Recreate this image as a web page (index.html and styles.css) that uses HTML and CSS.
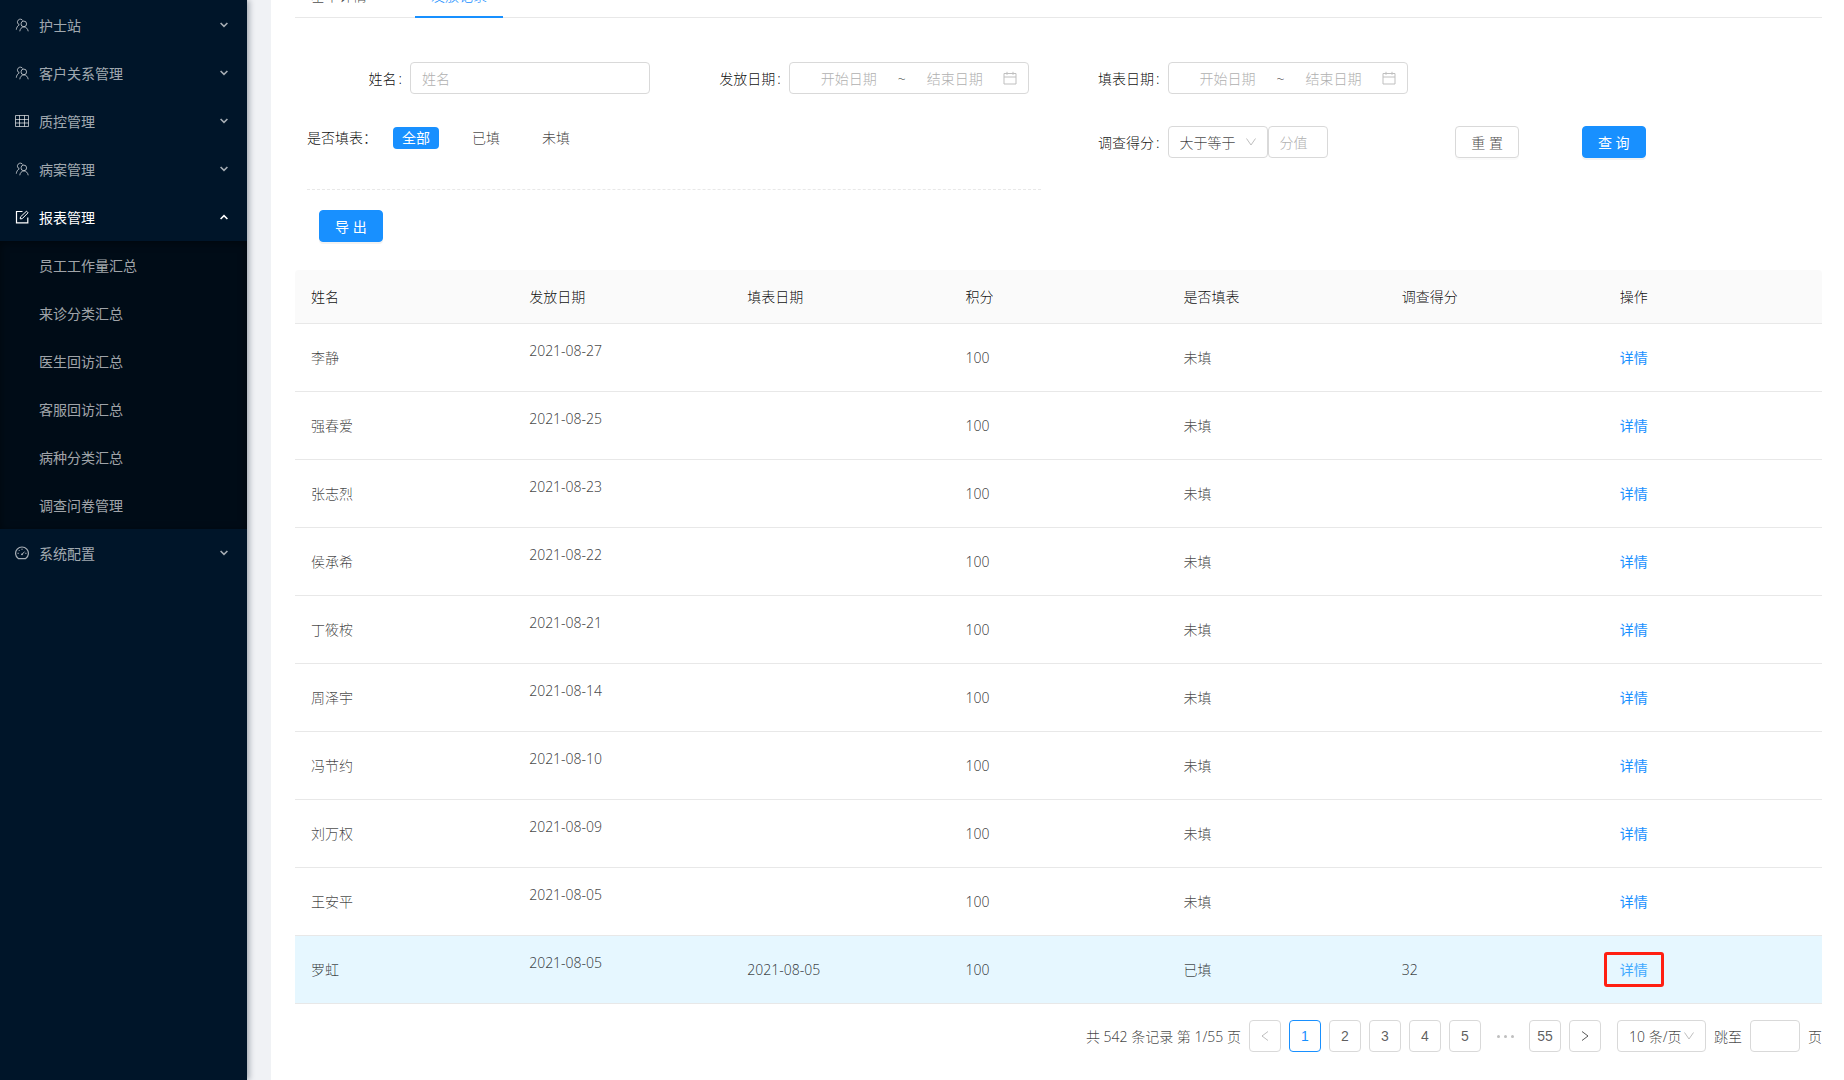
FILE: index.html
```html
<!DOCTYPE html>
<html lang="zh-CN">
<head>
<meta charset="utf-8">
<meta name="viewport" content="width=device-width, initial-scale=1">
<title>调查问卷管理</title>
<link rel="stylesheet" href="styles.css">
</head>
<body>
<svg class="sprite" aria-hidden="true">
  <symbol id="i-users" viewBox="0 0 14 14"><g fill="none" stroke="currentColor"><circle cx="8.800" cy="5.900" r="2.800"/><path d="M4.800 13.300C5 11 6.600 8.900 8.900 8.900S12.900 11 13.200 13.300M4.400 6.800A2.900 2.900 0 1 1 7.900 2.700M4.200 6.700C2.500 7.900 1.500 9.600 1.300 11.700"/></g></symbol>
  <symbol id="i-table" viewBox="0 0 14 14"><path d="M.5 1.500h13v11H.500zM.500 5.500h13M.500 9h13M4.500 1.500v11M9.500 1.500v11" fill="none" stroke="currentColor"/></symbol>
  <symbol id="i-form" viewBox="0 0 14 14"><path d="M7.500 1.500H1.500v11.300h11.300V7.500" fill="none" stroke="currentColor" stroke-width="1.200"/><path d="M5.200 8.900l.3-2L11.500 1.200l1.500 1.600L7.200 8.700z" fill="none" stroke="currentColor"/></symbol>
  <symbol id="i-dash" viewBox="0 0 14 14"><path d="M3.300 12.600A6.400 6.400 0 1 1 10.700 12.600z" fill="none" stroke="currentColor" stroke-width="1.200" stroke-linejoin="round"/><path d="M7 8.400L9.600 5.600M7 2.600v1.300M2.500 7.300h1.300M10.200 7.300h1.300M3.800 4.100l.9.900" fill="none" stroke="currentColor"/><circle cx="7" cy="8.300" r=".9" fill="currentColor"/></symbol>
  <symbol id="i-cal" viewBox="0 0 14 14"><path d="M1 2.500h12v10.500H1zM1 6h12M4 .8v3M10 .8v3" fill="none" stroke="currentColor"/></symbol>
  <symbol id="i-down" viewBox="0 0 12 12"><path d="M1.500 2.500L6 9l4.500-6.500" fill="none" stroke="currentColor"/></symbol>
  <symbol id="i-arrow" viewBox="0 0 8 6"><path d="M.6 1L4 4.300 7.400 1" fill="none" stroke="currentColor" stroke-width="1.600"/></symbol>
  <symbol id="i-left" viewBox="0 0 12 12"><path d="M9 1.500L3 6l6 4.500" fill="none" stroke="currentColor"/></symbol>
</svg>

<div class="layout">
  <nav class="sider">
    <ul class="menu">
      <li><a class="item" href="#"><svg class="icon"><use href="#i-users"/></svg><span>护士站</span><svg class="arrow"><use href="#i-arrow"/></svg></a></li>
      <li><a class="item" href="#"><svg class="icon"><use href="#i-users"/></svg><span>客户关系管理</span><svg class="arrow"><use href="#i-arrow"/></svg></a></li>
      <li><a class="item" href="#"><svg class="icon"><use href="#i-table"/></svg><span>质控管理</span><svg class="arrow"><use href="#i-arrow"/></svg></a></li>
      <li><a class="item" href="#"><svg class="icon"><use href="#i-users"/></svg><span>病案管理</span><svg class="arrow"><use href="#i-arrow"/></svg></a></li>
      <li><a class="item open" href="#"><svg class="icon"><use href="#i-form"/></svg><span>报表管理</span><svg class="arrow"><use href="#i-arrow"/></svg></a>
        <ul class="submenu">
          <li><a class="item" href="#">员工工作量汇总</a></li>
          <li><a class="item" href="#">来诊分类汇总</a></li>
          <li><a class="item" href="#">医生回访汇总</a></li>
          <li><a class="item" href="#">客服回访汇总</a></li>
          <li><a class="item" href="#">病种分类汇总</a></li>
          <li><a class="item" href="#">调查问卷管理</a></li>
        </ul>
      </li>
      <li><a class="item" href="#"><svg class="icon"><use href="#i-dash"/></svg><span>系统配置</span><svg class="arrow"><use href="#i-arrow"/></svg></a></li>
    </ul>
  </nav>

  <main class="content">
    <div class="tabs">
      <a class="tab" href="#">基本详情</a>
      <a class="tab active" href="#">发放记录</a>
    </div>

    <form class="filters">
      <div class="field">
        <label class="caption" for="name">姓名</label>
        <input class="box name" id="name" type="text" placeholder="姓名">
      </div>
      <div class="field">
        <label class="caption" for="send-from">发放日期</label>
        <div class="box range">
          <input id="send-from" type="text" placeholder="开始日期"><span>~</span><input type="text" placeholder="结束日期" aria-label="发放结束日期"><svg class="icon"><use href="#i-cal"/></svg>
        </div>
      </div>
      <div class="field">
        <label class="caption" for="fill-from">填表日期</label>
        <div class="box range">
          <input id="fill-from" type="text" placeholder="开始日期"><span>~</span><input type="text" placeholder="结束日期" aria-label="填表结束日期"><svg class="icon"><use href="#i-cal"/></svg>
        </div>
      </div>
      <fieldset class="status">
        <legend class="status-title">是否填表：</legend>
        <label class="tag"><input type="radio" name="filled" checked>全部</label>
        <label class="tag"><input type="radio" name="filled">已填</label>
        <label class="tag"><input type="radio" name="filled">未填</label>
      </fieldset>
      <div class="field">
        <label class="caption" for="op">调查得分</label>
        <div class="select op"><select class="box" id="op"><option>大于等于</option></select><svg><use href="#i-down"/></svg></div>
        <input class="box score" type="text" placeholder="分值" aria-label="分值">
      </div>
      <div class="actions">
        <button class="btn" type="reset">重 置</button>
        <button class="btn primary" type="button">查 询</button>
      </div>
    </form>

    <div class="toolbar"><button class="btn primary" type="button">导 出</button></div>

    <table class="records">
      <thead><tr><th>姓名</th><th>发放日期</th><th>填表日期</th><th>积分</th><th>是否填表</th><th>调查得分</th><th>操作</th></tr></thead>
      <tbody>
        <tr><td>李静</td><td><p>2021-08-27</p></td><td></td><td>100</td><td>未填</td><td></td><td><a href="#">详情</a></td></tr>
        <tr><td>强春爱</td><td><p>2021-08-25</p></td><td></td><td>100</td><td>未填</td><td></td><td><a href="#">详情</a></td></tr>
        <tr><td>张志烈</td><td><p>2021-08-23</p></td><td></td><td>100</td><td>未填</td><td></td><td><a href="#">详情</a></td></tr>
        <tr><td>侯承希</td><td><p>2021-08-22</p></td><td></td><td>100</td><td>未填</td><td></td><td><a href="#">详情</a></td></tr>
        <tr><td>丁筱桉</td><td><p>2021-08-21</p></td><td></td><td>100</td><td>未填</td><td></td><td><a href="#">详情</a></td></tr>
        <tr><td>周泽宇</td><td><p>2021-08-14</p></td><td></td><td>100</td><td>未填</td><td></td><td><a href="#">详情</a></td></tr>
        <tr><td>冯节约</td><td><p>2021-08-10</p></td><td></td><td>100</td><td>未填</td><td></td><td><a href="#">详情</a></td></tr>
        <tr><td>刘万权</td><td><p>2021-08-09</p></td><td></td><td>100</td><td>未填</td><td></td><td><a href="#">详情</a></td></tr>
        <tr><td>王安平</td><td><p>2021-08-05</p></td><td></td><td>100</td><td>未填</td><td></td><td><a href="#">详情</a></td></tr>
        <tr class="current"><td>罗虹</td><td><p>2021-08-05</p></td><td>2021-08-05</td><td>100</td><td>已填</td><td>32</td><td><a class="marked" href="#">详情</a></td></tr>
      </tbody>
    </table>

    <div class="pagination">
      <span class="total">共 542 条记录 第 1/55 页</span>
      <button class="page" type="button" disabled aria-label="上一页"><svg><use href="#i-left"/></svg></button>
      <button class="page active" type="button">1</button>
      <button class="page" type="button">2</button>
      <button class="page" type="button">3</button>
      <button class="page" type="button">4</button>
      <button class="page" type="button">5</button>
      <span class="more"><i></i><i></i><i></i></span>
      <button class="page" type="button">55</button>
      <button class="page next" type="button" aria-label="下一页"><svg><use href="#i-left"/></svg></button>
      <div class="select size"><select class="box" aria-label="每页条数"><option>10 条/页</option></select><svg><use href="#i-down"/></svg></div>
      <label for="jump">跳至</label>
      <input class="box jump" id="jump" type="text">
      <span>页</span>
    </div>
  </main>
</div>
</body>
</html>
```

FILE: styles.css
```css
* { box-sizing: border-box; }

body {
  margin: 0;
  background: #f0f2f5;
  color: rgba(0, 0, 0, 0.75);
  font: 300 14px/21px "Noto Sans", "Noto Sans CJK SC", sans-serif;
}

a { color: #1890ff; text-decoration: none; }
ul { margin: 0; padding: 0; list-style: none; }
input, select, button { font: inherit; color: inherit; }
.sprite { display: none; }
.icon { width: 14px; height: 14px; flex: none; }

.layout { display: flex; min-height: 100vh; }

/* Side menu */
.sider {
  position: relative;
  flex: 0 0 247px;
  padding-top: 1px;
  background: #001529;
  box-shadow: 2px 0 6px rgba(0, 21, 41, 0.35);
  font-weight: 400;
}
.item {
  display: flex;
  align-items: center;
  gap: 10px;
  height: 48px;
  padding: 0 19px 0 15px;
  color: rgba(255, 255, 255, 0.65);
}
.item.open { color: #fff; }
.arrow { width: 8px; height: 6px; margin-left: auto; }
.open .arrow { transform: rotate(180deg); }
.submenu { background: #000c17; box-shadow: inset 0 2px 8px rgba(0, 0, 0, 0.45); }
.submenu .item { padding-left: 39px; }

/* Content */
.content {
  flex: 1;
  min-width: 0;
  margin-left: 24px;
  padding: 0 22px 24px 24px;
  background: #fff;
}

.tabs {
  display: flex;
  align-items: flex-end;
  gap: 32px;
  height: 18px;
  overflow: hidden;
  box-shadow: inset 0 -1px #e8e8e8;
}
.tab { padding: 0 16px 12px; color: inherit; }
.tab.active { padding-bottom: 10px; border-bottom: 2px solid #1890ff; color: #1890ff; }

.filters {
  display: grid;
  grid-template-columns: repeat(4, minmax(0, 1fr));
  row-gap: 32px;
  padding: 44px 0 0 12px;
}
.field { display: flex; align-items: center; height: 32px; }
.caption {
  flex: 0 0 103px;
  text-align: right;
  color: rgba(0, 0, 0, 0.95);
}
.caption::after { content: ":"; margin: 0 8px 0 2px; }

.box {
  height: 32px;
  padding: 0 11px;
  border: 1px solid #d9d9d9;
  border-radius: 4px;
  background: #fff;
  outline: 0;
}
::placeholder { color: #b0b0b0; opacity: 1; }
.name { width: 240px; }
.range { display: flex; align-items: center; width: 240px; }
.range input {
  width: 96px;
  padding: 0;
  border: 0;
  outline: 0;
  background: none;
  text-align: center;
}
.range span { width: 10px; text-align: center; }
.range .icon { color: #bfbfbf; }

.select { position: relative; }
.select select { width: 100%; appearance: none; }
.select svg {
  position: absolute;
  top: 10px;
  right: 11px;
  width: 12px;
  height: 12px;
  color: #bfbfbf;
  pointer-events: none;
}
.op { width: 100px; }
.score { width: 60px; }

.status {
  grid-column: span 2;
  display: flex;
  gap: 24px;
  height: 64px;
  margin: 0 24px 0 0;
  padding: 1px 0 0;
  border: 0;
  border-bottom: 1px dashed #e8e8e8;
}
.status-title { float: left; margin-right: -8px; padding: 0; color: rgba(0, 0, 0, 0.95); }
.tag {
  height: 22px;
  padding: 0 9px;
  border-radius: 4px;
}
.tag input { position: absolute; appearance: none; margin: 0; }
.tag:has(:checked) { background: #1890ff; color: #fff; font-weight: 400; }

.actions { display: flex; gap: 63px; padding-left: 12px; }
.btn {
  height: 32px;
  padding: 0 15px;
  border: 1px solid #d9d9d9;
  border-radius: 4px;
  background: #fff;
  box-shadow: 0 2px 0 rgba(0, 0, 0, 0.02);
}
.btn.primary {
  border-color: #1890ff;
  background: #1890ff;
  box-shadow: 0 2px 0 rgba(0, 0, 0, 0.05);
  color: #fff;
  font-weight: 400;
}
.toolbar { padding: 20px 24px 28px; }

/* Records */
.records { width: 100%; table-layout: fixed; border-collapse: separate; border-spacing: 0; }
th, td { padding: 16px; border-bottom: 1px solid #e8e8e8; text-align: left; }
th { background: #fafafa; color: rgba(0, 0, 0, 0.95); font-weight: 300; }
th:first-child { border-top-left-radius: 4px; }
th:last-child { border-top-right-radius: 4px; }
td { height: 68px; }
td a { font-weight: 400; }
td p { margin: 0 0 14px; }
.current td { background: #e6f7ff; }
.marked { position: relative; color: #40a9ff; }
.marked::after {
  content: "";
  position: absolute;
  inset: -8px -16px;
  border: 3px solid #ff1f12;
  border-radius: 3px;
}

/* Pagination */
.pagination {
  display: flex;
  justify-content: flex-end;
  align-items: center;
  gap: 8px;
  padding-top: 16px;
}
.page {
  width: 32px;
  height: 32px;
  padding: 0;
  border: 1px solid #d9d9d9;
  border-radius: 4px;
  background: #fff;
  color: rgba(0, 0, 0, 0.65);
  font-family: "Liberation Sans", Arial, sans-serif;
}
.page svg { display: block; width: 12px; height: 12px; margin: auto; }
.page:disabled { color: rgba(0, 0, 0, 0.25); }
.page.active { border-color: #1890ff; color: #1890ff; }
.next svg { transform: rotate(180deg); }
.more { display: flex; justify-content: center; gap: 4px; width: 32px; }
.more i { width: 3px; height: 3px; border-radius: 50%; background: #bfbfbf; }
.size { width: 89px; margin-left: 8px; }
.jump { width: 50px; }
```
